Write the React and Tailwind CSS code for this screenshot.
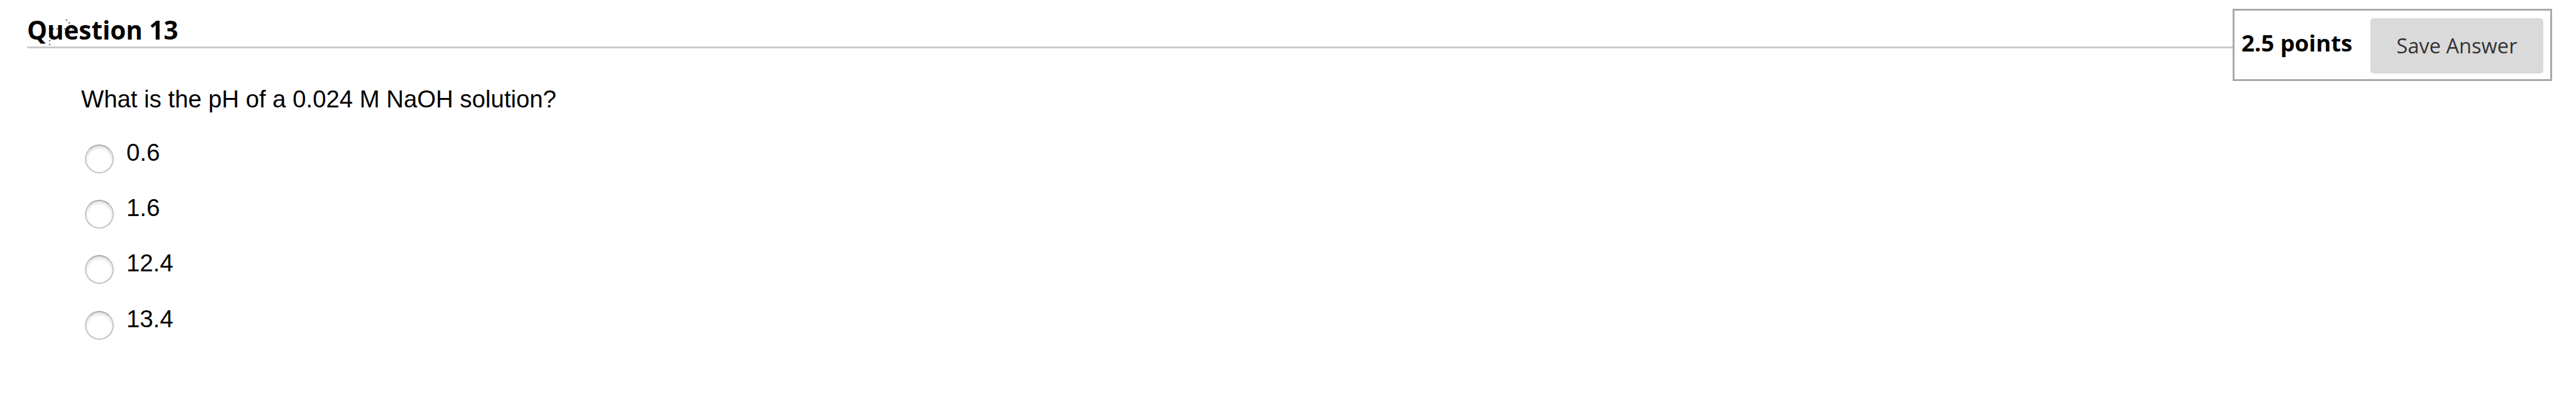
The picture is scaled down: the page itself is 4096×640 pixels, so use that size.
import React, { useState } from 'react';

const answers = ['0.6', '1.6', '12.4', '13.4'];

const Option = ({ value, checked, onSelect }) => {
  return (
    <label className="flex h-[88.2px] cursor-pointer">
      <input
        type="radio"
        name="answer"
        value={value}
        checked={checked}
        onChange={() => onSelect(value)}
        className="appearance-none mt-[11px] w-[46px] h-[46px] shrink-0 rounded-full border-2 border-[#c4c4c4] border-t-[#ababab] bg-white shadow-[inset_0_3px_5px_rgba(0,0,0,0.14)] checked:bg-[#dadada]"
      />
      <span className="ml-[20px] leading-[47px]">{value}</span>
    </label>
  );
};

const DottedArrow = () => (
  <svg className="absolute left-0 top-0 w-[90px] h-[62px]" viewBox="0 0 90 62" fill="none" stroke="#888" strokeWidth="2.5" strokeDasharray="2.5 3.6">
    <path d="M36 58V32H76" />
    <path d="M62 17L76 32L62 46" />
  </svg>
);

const App = () => {
  const [selected, setSelected] = useState('');

  return (
    <div className="w-[4096px] h-[640px] overflow-hidden bg-white text-black">
      <div className="flex items-start pl-[43px] pt-[14px]">
        <div className="relative grow h-[63px] border-b-[3px] border-[#cacaca]">
          <DottedArrow />
          <h3 className="relative font-['Open_Sans',sans-serif] font-bold text-[40.3px] leading-[54px] mt-[7px]">Question 13</h3>
        </div>
        <div className="flex w-[508px] h-[115px] mr-[38px] border-[3px] border-[#a9a9a9]">
          <span className="ml-[11px] w-[205px] font-['Open_Sans',sans-serif] font-bold text-[36.5px] leading-[103px] whitespace-nowrap">2.5 points</span>
          <button className="mt-[12px] w-[275px] h-[88px] rounded-[5px] bg-[#dadada] font-['Open_Sans',sans-serif] text-[32.6px] text-[#333]">Save Answer</button>
        </div>
      </div>
      <div className="pl-[129px] pt-[5px] font-['Liberation_Sans',sans-serif] text-[38.3px]">
        <p className="leading-[47px]">What is the pH of a 0.024 M NaOH solution?</p>
        <div className="pl-[6px] pt-[38px]">
          {answers.map((a) => (
            <Option key={a} value={a} checked={selected === a} onSelect={setSelected} />
          ))}
        </div>
      </div>
    </div>
  );
};

export default App;
